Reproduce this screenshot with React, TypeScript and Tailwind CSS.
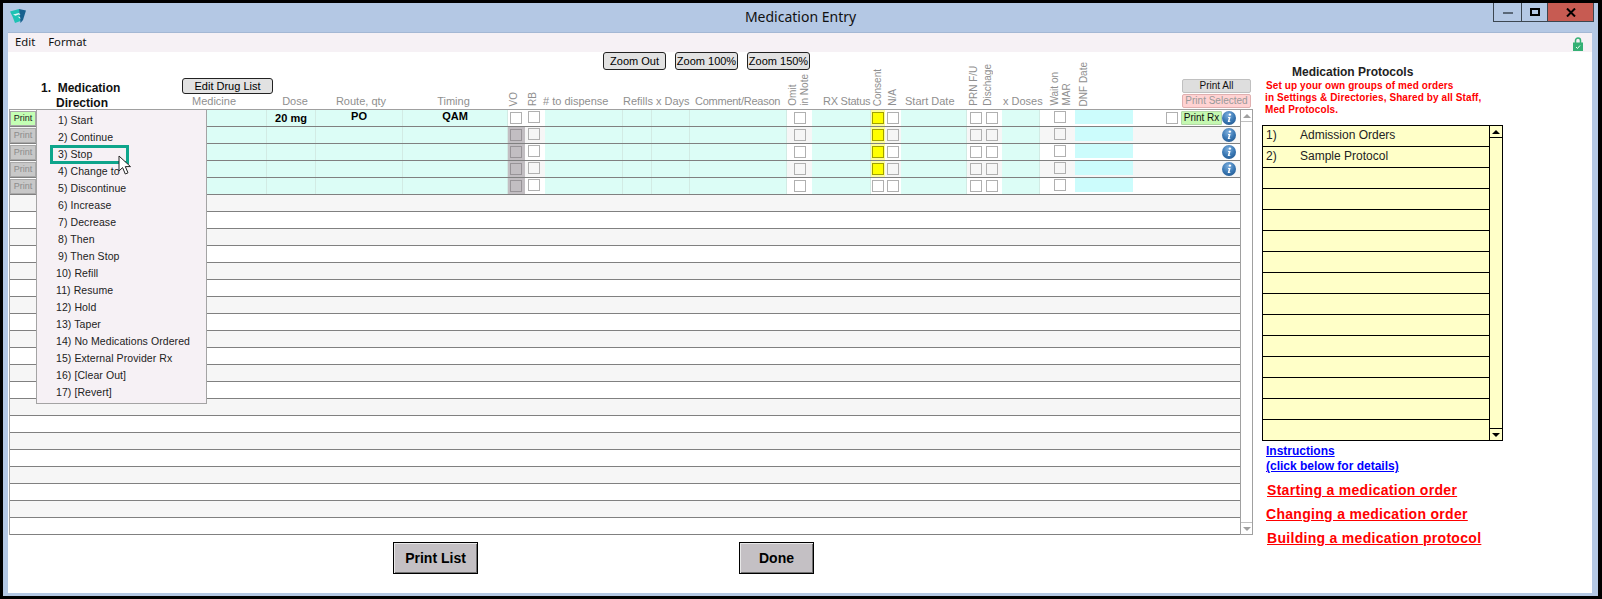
import { Fragment } from 'react'

const menuItems = [
  '1) Start', '2) Continue', '3) Stop', '4) Change to', '5) Discontinue', '6) Increase', '7) Decrease', '8) Then', '9) Then Stop',
  '10) Refill', '11) Resume', '12) Hold', '13) Taper', '14) No Medications Ordered', '15) External Provider Rx', '16) [Clear Out]', '17) [Revert]',
]

const TEAL = 'h-full bg-[#dcfdf6] border-r border-[#d2ebe4] shrink-0'

function Box({ className = '' }: { className?: string }) {
  return <span className={`block w-[12px] h-[12px] border border-[#b0b0b0] shrink-0 ${className}`} />
}

function InfoIcon() {
  return (
    <svg width="14" height="14" viewBox="0 0 14 14" className="shrink-0">
      <defs>
        <radialGradient id="infoBlue" cx="45%" cy="30%" r="75%">
          <stop offset="0%" stopColor="#7fb0de" />
          <stop offset="60%" stopColor="#3a78b4" />
          <stop offset="100%" stopColor="#235a92" />
        </radialGradient>
      </defs>
      <circle cx="7" cy="7" r="7" fill="url(#infoBlue)" />
      <circle cx="7.9" cy="3.6" r="1.2" fill="#fff" />
      <path d="M6.2 6h2.4l-1.1 4.2h1l-.3.9H5.7l1.1-4.2h-.9z" fill="#fff" />
    </svg>
  )
}

function MedRow({ i }: { i: number }) {
  const first = i === 0
  const bg = i % 2 === 0 ? 'bg-white' : 'bg-[#f6f6f6]'
  return (
    <div className={`flex h-[17px] border-b border-[#808080] ${bg}`}>
      <div className="w-[26px] shrink-0 pt-px">
        <button className={`block w-[26px] h-[15px] text-[9px] leading-[13px] border border-[#a8a8a8] ${first ? 'bg-[#c4ffb4] text-[#222]' : 'bg-[#c8c8c8] text-[#8c8c8c]'}`}>
          Print
        </button>
      </div>
      <div className={`w-[231px] ${TEAL}`} />
      <div className={`w-[49px] ${TEAL} text-center text-[11px] font-bold text-black leading-[15px] pt-px`}>{first && '20 mg'}</div>
      <div className={`w-[87px] ${TEAL} text-center text-[11px] font-bold text-black leading-[13px]`}>{first && 'PO'}</div>
      <div className={`w-[105px] ${TEAL} text-center text-[11px] font-bold text-black leading-[13px]`}>{first && 'QAM'}</div>
      <div className={`w-[17px] shrink-0 pl-[2px] pt-[2px] ${first ? 'bg-white' : 'bg-[#c2bec2]'}`}><Box className={first ? '' : '!border-[#989498]'} /></div>
      <div className="w-[20px] shrink-0 pl-[3px] pt-px"><Box /></div>
      <div className={`w-[78px] ${TEAL}`} />
      <div className={`w-[29px] ${TEAL}`} />
      <div className={`w-[38px] ${TEAL}`} />
      <div className={`w-[97px] ${TEAL}`} />
      <div className="w-[25px] shrink-0 pl-[7px] pt-[2px]"><Box /></div>
      <div className={`w-[59px] ${TEAL}`} />
      <div className={`w-[14px] shrink-0 pl-[1px] pt-[2px] ${i < 4 ? 'bg-[#fdfd9c]' : ''}`}>
        <Box className={i < 4 ? 'bg-[#ffff00] !border-[#a0a000]' : ''} />
      </div>
      <div className="w-[16px] shrink-0 pl-[2px] pt-[2px]"><Box /></div>
      <div className={`w-[66px] ${TEAL}`} />
      <div className="w-[35px] shrink-0 flex gap-[4px] pl-[3px] pt-[2px]"><Box /><Box /></div>
      <div className={`w-[38px] ${TEAL}`} />
      <div className="w-[35px] shrink-0 pl-[14px] pt-px"><Box /></div>
      <div className="w-[58px] shrink-0 h-[14px] bg-[#ccfcfc]" />
      <div className="w-[107px] shrink-0 flex items-start pt-px">
        {first && <Box className="ml-[33px] mt-[1px]" />}
        {first && (
          <button className="ml-[3px] w-[41px] h-[14px] bg-[#c4f8b0] border border-[#b4d8a8] rounded-[1px] text-[10px] leading-[12px] text-[#111] whitespace-nowrap">
            Print Rx
          </button>
        )}
        {i < 4 && <span className={first ? '' : 'ml-[89px]'}><InfoIcon /></span>}
      </div>
    </div>
  )
}

function Header() {
  const label = 'shrink-0 whitespace-nowrap text-[11px] leading-[13px] text-[#8f8f8f]'
  const vert = 'block [writing-mode:vertical-rl] rotate-180 whitespace-nowrap text-[10px] leading-[12px] text-[#8f8f8f]'
  return (
    <div className="grid h-[57px] ml-[2px] w-[1243px]">
      <div className="col-start-1 row-start-1 flex items-start gap-[9px] pl-[593px]">
        {['Zoom Out', 'Zoom 100%', 'Zoom 150%'].map(z => (
          <button key={z} className="w-[63px] h-[18px] bg-[#e2e2e2] border border-[#222] rounded-[3px] text-[11px] leading-[15px] text-black whitespace-nowrap">{z}</button>
        ))}
      </div>
      <div className="col-start-1 row-start-1 flex items-end">
        <div className="w-[264px] shrink-0 flex items-end">
          <div className="w-[172px] shrink-0 pl-[31px] -mb-[2px] text-[12px] font-bold leading-[15px] text-[#111]">
            <div>1.&nbsp; Medication</div>
            <div className="pl-[15px]">Direction</div>
          </div>
          <div className="w-[92px] shrink-0">
            <button className="block w-[91px] h-[16px] bg-[#e2e2e2] border border-[#222] rounded-[3px] text-[11px] leading-[13px] text-black">Edit Drug List</button>
            <div className={`${label} pl-[10px] mt-[1px] pb-px`}>Medicine</div>
          </div>
        </div>
        <div className={`${label} w-[42px] text-center pb-px`}>Dose</div>
        <div className={`${label} w-[87px] text-center pb-px pl-[3px]`}>Route, qty</div>
        <div className={`${label} w-[105px] text-center pb-px pr-[4px]`}>Timing</div>
        <div className="w-[17px] shrink-0 pb-[3px] pl-[-1px] flex justify-start"><span className={vert}>VO</span></div>
        <div className="w-[16px] shrink-0 pb-[3px] flex justify-center"><span className={vert}>RB</span></div>
        <div className={`${label} w-[82px] pl-[2px] pb-px`}># to dispense</div>
        <div className={`${label} w-[29px] pb-px`}>Refills</div>
        <div className={`${label} w-[38px] pl-[4px] pb-px`}>x Days</div>
        <div className={`${label} w-[97px] pl-[5px] pb-px tracking-[-0.25px]`}>Comment/Reason</div>
        <div className="w-[25px] shrink-0 pb-[3px]"><span className={vert}>Omit<br />in Note</span></div>
        <div className={`${label} w-[59px] pl-[11px] pb-px tracking-[-0.25px]`}>RX Status</div>
        <div className="w-[14px] shrink-0 pb-[3px] flex justify-center"><span className={vert}>Consent</span></div>
        <div className="w-[16px] shrink-0 pb-[3px] flex justify-center"><span className={vert}>N/A</span></div>
        <div className={`${label} w-[66px] pl-[4px] pb-px`}>Start Date</div>
        <div className="w-[35px] shrink-0 pb-[3px] pl-[1px]"><span className={vert}>PRN F/U<br /><span className="block h-0 w-[2px]" />Dischage</span></div>
        <div className={`${label} w-[38px] pl-[1px] pb-px`}>x Doses</div>
        <div className="w-[35px] shrink-0 pb-[3px] pl-[9px]"><span className={vert}>Wait on<br />MAR</span></div>
        <div className="w-[58px] shrink-0 pb-[3px] pl-[3px]"><span className={vert}>DNF Date</span></div>
        <div className="w-[107px] shrink-0 pl-[49px] pb-px">
          <div className="w-[69px] h-[14px] mb-px bg-[#dedede] border border-[#c0c0c0] rounded-[2px] text-[10px] leading-[12px] text-center text-[#111]">Print All</div>
          <div className="w-[69px] h-[14px] bg-[#ffd2d2] border border-[#e0b0b0] rounded-[2px] text-[10px] leading-[12px] text-center text-[#999] whitespace-nowrap">Print Selected</div>
        </div>
      </div>
    </div>
  )
}

function PopupMenu() {
  return (
    <>
      <div className="absolute left-[26px] top-0 w-[171px] h-[294px] pt-[2px] bg-[#f6f1f5] border-x border-b border-[#a4a4a4] text-[10.5px] leading-[17px] tracking-[0.08px] text-[#222]">
        {menuItems.map((m, i) => (
          <div key={m} className={`h-[17px] whitespace-nowrap ${i < 9 ? 'pl-[21px]' : 'pl-[19px]'}`}>{m}</div>
        ))}
      </div>
      <div className="absolute left-[40px] top-[35px] w-[79px] h-[19px] border-[3px] border-[#0ea58b]" />
      <svg className="absolute left-[108px] top-[45px]" width="14" height="21" viewBox="0 0 14 21">
        <path d="M1 1v15l3.6-3.4L7.3 19l2.7-1.2-2.7-6.2H12.5z" fill="#fff" stroke="#222" strokeWidth="1" strokeLinejoin="round" />
      </svg>
    </>
  )
}

function ScrollBar() {
  return (
    <div className="w-[12px] shrink-0 flex flex-col justify-between border-l border-b border-[#a0a0a0]">
      <div className="h-[12px] border-b border-[#c0c0c0] flex items-center justify-center">
        <span className="block w-0 h-0 border-x-[4px] border-x-transparent border-b-[4px] border-b-[#a0a0a0]" />
      </div>
      <div className="h-[12px] border-t border-[#c0c0c0] flex items-center justify-center">
        <span className="block w-0 h-0 border-x-[4px] border-x-transparent border-t-[4px] border-t-[#a0a0a0]" />
      </div>
    </div>
  )
}

function ProtocolPanel() {
  return (
    <div className="ml-[8px] w-[330px] shrink-0">
      <div className="pl-[30px] pt-[13px] text-[12px] leading-[14px] font-bold text-[#222]">Medication Protocols</div>
      <div className="pl-[3px] pt-[1px] text-[10px] leading-[12px] font-bold text-[#ff0000] tracking-[0.1px] whitespace-nowrap">
        <div className="pl-px">Set up your own groups of med orders</div>
        <div>in Settings &amp; Directories, Shared by all Staff,</div>
        <div>Med Protocols.</div>
      </div>
      <div className="mt-[9px] w-[241px] h-[316px] border border-black flex bg-[#ffffc8]">
        <div className="flex-1">
          {Array.from({ length: 15 }).map((_, i) => (
            <div key={i} className={`h-[21px] flex text-[12px] leading-[19px] text-[#222] ${i < 14 ? 'border-b border-black' : ''}`}>
              {i === 0 && <Fragment><span className="pl-[3px] w-[37px]">1)</span><span>Admission Orders</span></Fragment>}
              {i === 1 && <Fragment><span className="pl-[3px] w-[37px]">2)</span><span>Sample Protocol</span></Fragment>}
            </div>
          ))}
        </div>
        <div className="w-[13px] shrink-0 flex flex-col justify-between border-l border-black">
          <div className="h-[12px] border-b border-black flex items-center justify-center">
            <span className="block w-0 h-0 border-x-[4px] border-x-transparent border-b-[4px] border-b-black" />
          </div>
          <div className="h-[12px] border-t border-black flex items-center justify-center">
            <span className="block w-0 h-0 border-x-[4px] border-x-transparent border-t-[4px] border-t-black" />
          </div>
        </div>
      </div>
      <div className="pl-[4px] pt-[3px] text-[12px] leading-[15px] font-bold text-[#0000ff] underline">
        <div>Instructions</div>
        <div>(click below for details)</div>
      </div>
      <div className="pl-[5px] pt-[4px] text-[14px] leading-[24px] font-bold text-[#ff0000] underline tracking-[0.3px]">
        <div>Starting a medication order</div>
        <div className="-ml-px">Changing a medication order</div>
        <div>Building a medication protocol</div>
      </div>
    </div>
  )
}

export default function App() {
  const bigBtn = 'h-[32px] bg-[#c4c0c4] border border-black shadow-[inset_1px_1px_0_#e8e8e8,inset_-1px_-1px_0_#707070] text-[14px] font-bold text-black'
  return (
    <div className="w-[1602px] h-[599px] bg-black pt-[3px] pl-[3px] pr-[4px] pb-[3px] overflow-hidden font-['Liberation_Sans',Arial,sans-serif]">
      <div className="h-full flex flex-col bg-[#b4c8e4] pl-[5px] pr-[6px] pb-[3px]">
        {/* title bar */}
        <div className="h-[29px] shrink-0 grid grid-cols-[1fr_auto_1fr] -mr-[6px] -ml-[5px]">
          <div className="pl-[7px] pt-[6px]">
            <svg width="16" height="14" viewBox="0 0 16 14">
              <path d="M0 2.5 9 0l1.5 12L5 14 2.5 7.5z" fill="#1fc2b4" />
              <path d="M9 0l7 1.5L13 11l-2.5 3z" fill="#17618f" />
              <path d="M3 5.5 9 4l1.5 2-2-.4-3 1.2z" fill="#e8f6f6" />
              <path d="M7.5 7.5l2.5.5.5 2z" fill="#e8f6f6" />
            </svg>
          </div>
          <div className="font-['Noto_Sans',sans-serif] text-[14px] leading-[28px] text-[#111]">Medication Entry</div>
          <div className="flex justify-end pr-[4px]">
            <div className="flex h-[19px] border-x border-b border-[#3c4650]">
              <div className="w-[28px] border-r border-[#3c4650] flex items-center justify-center pt-[2px]"><span className="block w-[10px] h-[2px] bg-[#5a6878]" /></div>
              <div className="w-[26px] border-r border-[#3c4650] flex items-center justify-center"><span className="block w-[10px] h-[8px] border-2 border-black" /></div>
              <div className="w-[45px] bg-[#c75b52] flex items-center justify-center">
                <svg width="10" height="9" viewBox="0 0 10 9"><path d="M1 .5 9 8.5M9 .5 1 8.5" stroke="#000" strokeWidth="2" /></svg>
              </div>
            </div>
          </div>
        </div>

        {/* client area */}
        <div className="flex-1 min-h-0 flex flex-col bg-white border-t border-[#a4b8d4]">
          <div className="h-[19px] shrink-0 bg-[#f6f1f5] flex items-center justify-between pl-[7px] pr-[9px] pb-px font-['Noto_Sans',sans-serif] text-[11.3px] text-[#111]">
            <div className="flex gap-[13px]"><span>Edit</span><span>Format</span></div>
            <svg width="10" height="14" viewBox="0 0 10 14" className="mt-[4px]">
              <path d="M2.5 6V3.5a2.5 2.5 0 0 1 5 0V6" fill="none" stroke="#35b074" strokeWidth="1.5" />
              <rect x="0" y="5.5" width="10" height="8.5" fill="#35b074" />
              <path d="M3 10l1.5 1.5L7 8.5" fill="none" stroke="#e8fff0" strokeWidth="1" />
            </svg>
          </div>
          <div className="flex-1 flex">
            <div className="w-[1245px] shrink-0 ml-px flex flex-col">
              <div className="-ml-px"><Header /></div>
              <div className="relative w-[1244px] flex border-t border-x border-[#a0a0a0]">
                <div className="w-[1230px] shrink-0">
                  {Array.from({ length: 25 }).map((_, i) =>
                    i < 5 ? (
                      <MedRow key={i} i={i} />
                    ) : (
                      <div key={i} className={`h-[17px] border-b border-[#808080] ${i % 2 === 0 ? 'bg-white' : 'bg-[#f6f6f6]'}`} />
                    ),
                  )}
                </div>
                <ScrollBar />
                <PopupMenu />
              </div>
              <div className="flex pl-[384px] pt-[7px] gap-[261px]">
                <button className={`${bigBtn} w-[85px]`}>Print List</button>
                <button className={`${bigBtn} w-[75px]`}>Done</button>
              </div>
            </div>
            <ProtocolPanel />
          </div>
        </div>
      </div>
    </div>
  )
}
